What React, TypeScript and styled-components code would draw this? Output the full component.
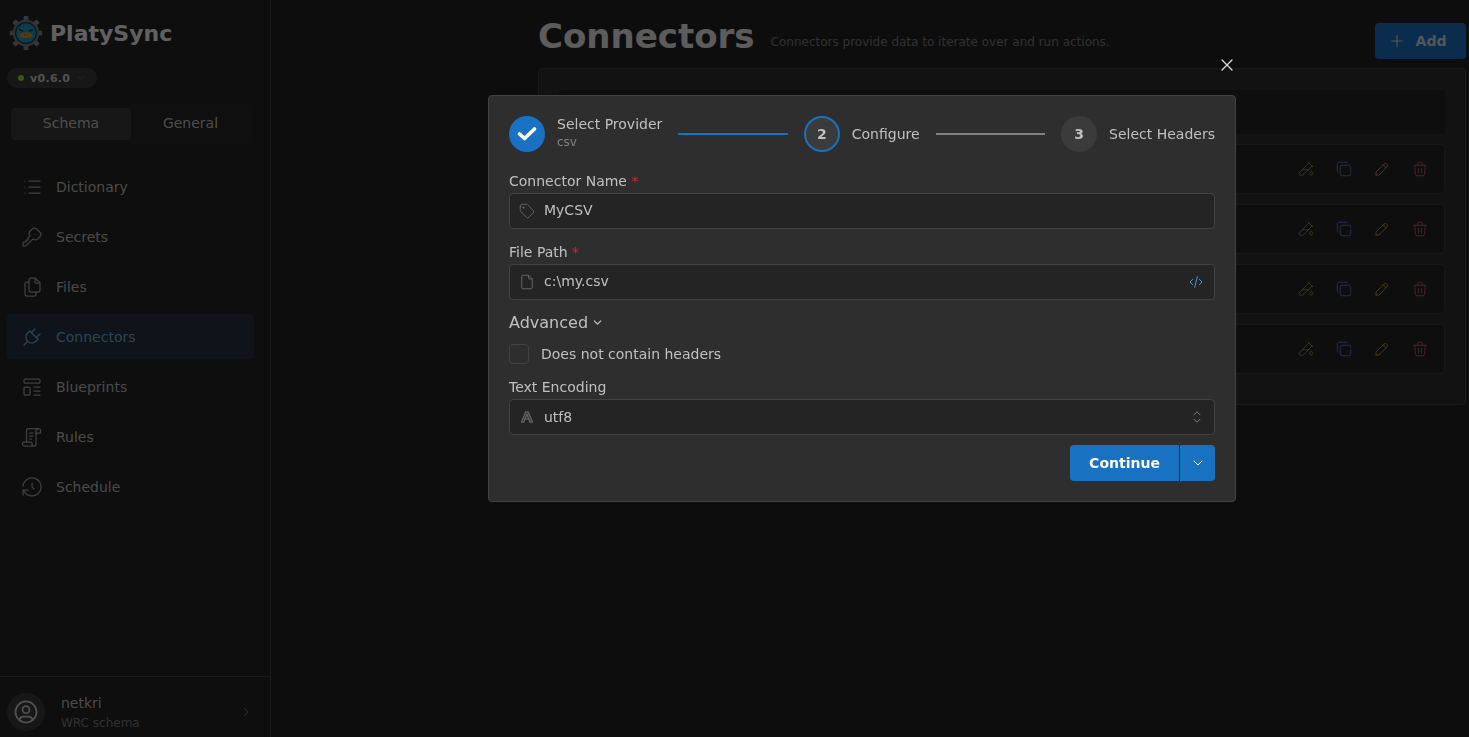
import { FC, ReactNode } from "react";
import styled, { createGlobalStyle } from "styled-components";
import {
  TbChevronDown,
  TbChevronRight,
  TbCode,
  TbCopy,
  TbFile,
  TbFiles,
  TbHistory,
  TbKey,
  TbList,
  TbPencil,
  TbPlug,
  TbPlus,
  TbSelector,
  TbTag,
  TbTemplate,
  TbTestPipe,
  TbTrash,
  TbUserCircle,
  TbX,
} from "react-icons/tb";

const GlobalStyle = createGlobalStyle`
  html, body {
    margin: 0;
    height: 100%;
    overflow: hidden;
    background: #222222;
  }
  * {
    box-sizing: border-box;
  }
  body {
    font-family: "DejaVu Sans", sans-serif;
    font-size: 14px;
    color: #c9c9c9;
  }
`;

const Shell = styled.div`
  display: flex;
  height: 737px;
`;

const Sidebar = styled.aside`
  width: 271px;
  flex-shrink: 0;
  display: flex;
  flex-direction: column;
  border-right: 1px solid #424242;
  background: #242424;
`;

const Brand = styled.div`
  display: flex;
  align-items: center;
  gap: 7px;
  padding: 0 0 2px 9px;
  height: 68px;
`;

const BrandName = styled.span`
  font-size: 22px;
  font-weight: 700;
  color: #f0f0f0;
`;

const VersionBadge = styled.div`
  width: 90px;
  height: 20px;
  margin-left: 7px;
  padding-left: 11px;
  display: flex;
  align-items: center;
  gap: 6px;
  border-radius: 10px;
  background: #3b3b3b;
  font-size: 11px;
  font-weight: 700;
  letter-spacing: 0.3px;
  color: #c9c9c9;
`;

const Dot = styled.span`
  width: 6px;
  height: 6px;
  border-radius: 50%;
  background: #94d82d;
`;

const Tabs = styled.div`
  margin: 16px 16px 0 7px;
  height: 40px;
  padding: 4px;
  display: grid;
  grid-template-columns: 120px 1fr;
  gap: 0;
  border-radius: 4px;
  background: #262626;
`;

const Tab = styled.div<{ $active?: boolean }>`
  display: flex;
  align-items: center;
  justify-content: center;
  padding-bottom: 2px;
  border-radius: 4px;
  background: ${(p) => (p.$active ? "#3b3b3b" : "transparent")};
  color: #c0c0c0;
`;

const Nav = styled.nav`
  display: flex;
  flex-direction: column;
  gap: 5px;
  margin: 20px 16px 0 7px;
  flex: 1;
`;

const NavItem = styled.div<{ $active?: boolean }>`
  height: 45px;
  display: flex;
  align-items: center;
  gap: 12px;
  padding-left: 13px;
  border-radius: 4px;
  background: ${(p) => (p.$active ? "rgba(34, 139, 230, 0.15)" : "transparent")};
  color: ${(p) => (p.$active ? "#74a9d8" : "#b8b8b8")};
  font-size: 14px;

  svg {
    width: 24px;
    height: 24px;
    stroke-width: 1.25;
    color: ${(p) => (p.$active ? "#74a9d8" : "#a0a0a0")};
  }
`;

const UserRow = styled.div`
  height: 61px;
  border-top: 1px solid #424242;
  display: flex;
  align-items: center;
  padding: 10px 16px 0 7px;
`;

const Avatar = styled.div`
  width: 38px;
  height: 38px;
  border-radius: 50%;
  background: #3b3b3b;
  display: flex;
  align-items: center;
  justify-content: center;
  color: #c9c9c9;

  svg {
    width: 28px;
    height: 28px;
    stroke-width: 1.5;
  }
`;

const UserText = styled.div`
  flex: 1;
  margin-left: 16px;
  display: flex;
  flex-direction: column;
  gap: 5px;
`;

const UserName = styled.span`
  font-size: 14px;
  color: #b8b8b8;
`;

const UserSchema = styled.span`
  font-size: 12px;
  color: #7a7a7a;
`;

const Muted = styled.span`
  display: inline-flex;
  color: #828282;

  svg {
    stroke-width: 1.25;
  }
`;

const Main = styled.main`
  flex: 1;
  padding: 14px 3px 0 267px;
  display: flex;
  flex-direction: column;
`;

const PageHeader = styled.header`
  display: flex;
  align-items: flex-start;
  height: 54px;
`;

const PageTitle = styled.h1`
  margin: 0;
  font-size: 34px;
  line-height: 44px;
  font-weight: 700;
  color: #e6e6e6;
`;

const PageHint = styled.span`
  margin: 20px 0 0 16px;
  flex: 1;
  font-size: 12px;
  line-height: 16px;
  color: #7a7a7a;
`;

const AddButton = styled.div`
  width: 91px;
  height: 36px;
  margin-top: 9px;
  padding-right: 7px;
  display: flex;
  align-items: center;
  justify-content: center;
  gap: 10px;
  border-radius: 4px;
  background: #1971c2;
  color: #d8d8d8;
  font-weight: 700;

  svg {
    width: 18px;
    height: 18px;
    stroke-width: 1.5;
  }
`;

const Card = styled.section`
  height: 337px;
  padding: 21px 20px 0;
  display: flex;
  flex-direction: column;
  gap: 10px;
  border: 1px solid #424242;
  border-radius: 4px;
  background: #2e2e2e;
`;

const CardHead = styled.div`
  height: 44px;
  border-radius: 4px;
  background: #242424;
`;

const Row = styled.div`
  height: 50px;
  padding-right: 14px;
  display: flex;
  align-items: center;
  justify-content: flex-end;
  gap: 18px;
  border: 1px solid #3b3b3b;
  border-radius: 4px;
  background: #242424;
`;

const RowAction = styled.span<{ $color: string }>`
  width: 20px;
  display: flex;
  justify-content: center;
  color: ${(p) => p.$color};

  svg {
    width: 18px;
    height: 18px;
    stroke-width: 1.25;
  }
`;

const Overlay = styled.div`
  position: fixed;
  inset: 0;
  padding: 95px 0 0 255px;
  display: flex;
  justify-content: center;
  align-items: flex-start;
  background: rgba(0, 0, 0, 0.6);
  will-change: transform;
`;

const Modal = styled.div`
  position: relative;
  width: 748px;
  height: 407px;
  padding: 20px;
  border: 1px solid #424242;
  border-radius: 4px;
  background: #2e2e2e;
`;

const CloseButton = styled.span`
  position: absolute;
  top: -41px;
  right: -2px;
  color: #dcdcdc;
  display: flex;

  svg {
    width: 20px;
    height: 20px;
    stroke-width: 1.5;
  }
`;

const Stepper = styled.div`
  display: flex;
  align-items: center;
  height: 36px;
`;

const Step = styled.div`
  display: flex;
  align-items: center;
  gap: 12px;
`;

const StepCircle = styled.div<{ $state: "done" | "current" | "todo" }>`
  width: 36px;
  height: 36px;
  border-radius: 50%;
  display: flex;
  align-items: center;
  justify-content: center;
  font-weight: 700;
  font-size: 14px;
  color: ${(p) => (p.$state === "done" ? "#fff" : "#c0c0c0")};
  background: ${(p) => (p.$state === "done" ? "#1971c2" : "#3b3b3b")};
  border: ${(p) => (p.$state === "current" ? "2px solid #1971c2" : "none")};
`;

const StepText = styled.div`
  display: flex;
  flex-direction: column;
  gap: 3px;
  padding-bottom: 3px;
`;

const StepLabel = styled.span`
  font-size: 14px;
  line-height: 16px;
  color: #c0c0c0;
`;

const StepHint = styled.span`
  font-size: 12px;
  line-height: 14px;
  color: #828282;
`;

const StepLine = styled.div<{ $done?: boolean }>`
  flex: 1;
  height: 2px;
  margin: 0 16px;
  background: ${(p) => (p.$done ? "#1971c2" : "#828282")};
`;

const Field = styled.div<{ $first?: boolean }>`
  margin-top: ${(p) => (p.$first ? "20px" : "14px")};
  display: flex;
  flex-direction: column;
  gap: 3px;
`;

const FieldLabel = styled.label`
  font-size: 14px;
  line-height: 18px;
  color: #c0c0c0;

  em {
    font-style: normal;
    color: #c92a2a;
  }
`;

const InputBox = styled.div`
  height: 36px;
  display: flex;
  align-items: center;
  padding: 0 9px;
  gap: 9px;
  border: 1px solid #424242;
  border-radius: 4px;
  background: #242424;
  font-size: 14px;
  color: #c0c0c0;
`;

const InputIcon = styled.span`
  width: 16px;
  display: flex;
  justify-content: center;
  color: #666;

  svg {
    width: 18px;
    height: 18px;
    flex-shrink: 0;
    stroke-width: 1.25;
  }
`;

const InputValue = styled.span<{ $select?: boolean }>`
  flex: 1;
  padding-bottom: ${(p) => (p.$select ? "0" : "2px")};
`;

const CodeToggle = styled.span`
  display: flex;
  margin-right: 1px;
  color: #4a96d8;

  svg {
    width: 16px;
    height: 16px;
    stroke-width: 1.5;
  }
`;

const SelectArrows = styled.span`
  display: flex;
  margin-right: -1px;
  color: #828282;

  svg {
    width: 18px;
    height: 18px;
    stroke-width: 1.25;
  }
`;

const AdvancedToggle = styled.div`
  margin-top: 12px;
  height: 20px;
  display: flex;
  align-items: center;
  gap: 3px;
  font-size: 16px;
  color: #c0c0c0;

  svg {
    width: 13px;
    height: 13px;
    stroke-width: 2.5;
  }
`;

const CheckRow = styled.div`
  margin-top: 12px;
  display: flex;
  align-items: center;
  gap: 12px;
  color: #c0c0c0;
`;

const Checkbox = styled.span`
  width: 20px;
  height: 20px;
  border: 1px solid #424242;
  border-radius: 4px;
  background: #2e2e2e;
`;

const Footer = styled.div`
  margin-top: 10px;
  display: flex;
  justify-content: flex-end;
`;

const ContinueButton = styled.div`
  width: 109px;
  height: 36px;
  display: flex;
  align-items: center;
  justify-content: center;
  border-radius: 4px 0 0 4px;
  background: #1971c2;
  color: #fff;
  font-weight: 700;
`;

const MenuButton = styled.div`
  width: 36px;
  height: 36px;
  display: flex;
  align-items: center;
  justify-content: center;
  border-left: 1px solid #1f1f1f;
  border-radius: 0 4px 4px 0;
  background: #1971c2;
  color: #fff;

  svg {
    width: 16px;
    height: 16px;
    stroke-width: 1.5;
  }
`;

const Logo: FC = () => (
  <svg width="34" height="36" viewBox="0 0 34 38">
    <g fill="#8a8a8a">
      <rect x="14.5" y="1" width="5" height="7" rx="1" />
      <rect x="14.5" y="30" width="5" height="7" rx="1" />
      <rect x="0" y="16.5" width="7" height="5" rx="1" />
      <rect x="27" y="16.5" width="7" height="5" rx="1" />
      <rect x="14.5" y="1" width="5" height="7" rx="1" transform="rotate(45 17 19)" />
      <rect x="14.5" y="1" width="5" height="7" rx="1" transform="rotate(135 17 19)" />
      <rect x="14.5" y="1" width="5" height="7" rx="1" transform="rotate(225 17 19)" />
      <rect x="14.5" y="1" width="5" height="7" rx="1" transform="rotate(315 17 19)" />
    </g>
    <circle cx="17" cy="19" r="14" fill="#7c7c7c" />
    <circle cx="17" cy="19" r="11" fill="#1f9bb8" />
    <circle cx="17" cy="19" r="11" fill="none" stroke="#0b3b4c" strokeWidth="1.2" />
    <path d="M10 15.5 l3.5 1.5 M24 15.5 l-3.5 1.5" stroke="#0b2c38" strokeWidth="1.4" strokeLinecap="round" />
    <path d="M9.8 22.8 C10 20 13.5 18.2 17 18.2 C20.5 18.2 24 20 24.2 22.8 C22 24.6 12 24.6 9.8 22.8Z" fill="#ee8a2c" />
    <path d="M15.5 21 h0.1 M18.4 21 h0.1" stroke="#6e3208" strokeWidth="1.2" strokeLinecap="round" />
  </svg>
);

const CheckMark: FC = () => (
  <svg width="20" height="16" viewBox="0 0 20 16" fill="none" stroke="#fff" strokeWidth="3.6" strokeLinecap="round" strokeLinejoin="round">
    <path d="M2.5 8 L7.5 12.5 L17.5 3" />
  </svg>
);

const ScrollIcon: FC = () => (
  <svg viewBox="0 0 24 24" fill="none" stroke="currentColor" strokeLinecap="round" strokeLinejoin="round">
    <path d="M6.5 17 V6 a2.5 2.5 0 0 1 2.5 -2.5 H18.5 a2 2 0 0 1 2 2 V8 H16" />
    <path d="M18.5 3.5 a2.5 2.5 0 0 0 -2.5 2.5 V19 a2 2 0 0 1 -2 2 H5 a2.5 2.5 0 0 1 -2.5 -2.5 V18 a1 1 0 0 1 1 -1 H11 a1 1 0 0 1 1 1 V19 a2 2 0 0 0 2 2" />
    <path d="M9.5 8 h3.5 M9.5 11 h3.5 M9.5 14 h2" />
  </svg>
);

const OutlinedA: FC = () => (
  <svg viewBox="-3 -3 22 22" fill="none" stroke="currentColor" strokeWidth="1.4" strokeLinejoin="round">
    <path d="M1 14.5 L6.5 1.5 H9.5 L15 14.5 H11.5 L8 5 L4 14.5 Z" fill="currentColor" fillOpacity="0.45" />
    <path d="M5 10.5 H11" />
  </svg>
);

const navItems: { label: string; icon: ReactNode; active?: boolean }[] = [
  { label: "Dictionary", icon: <TbList /> },
  { label: "Secrets", icon: <TbKey /> },
  { label: "Files", icon: <TbFiles /> },
  { label: "Connectors", icon: <TbPlug />, active: true },
  { label: "Blueprints", icon: <TbTemplate /> },
  { label: "Rules", icon: <ScrollIcon /> },
  { label: "Schedule", icon: <TbHistory /> },
];

const App: FC = () => {
  return (
    <>
      <GlobalStyle />
      <Shell>
        <Sidebar>
          <Brand>
            <Logo />
            <BrandName>PlatySync</BrandName>
          </Brand>
          <VersionBadge>
            <Dot />
            v0.6.0
            <Muted>
              <TbChevronDown size={10} />
            </Muted>
          </VersionBadge>
          <Tabs>
            <Tab $active>Schema</Tab>
            <Tab>General</Tab>
          </Tabs>
          <Nav>
            {navItems.map((item) => (
              <NavItem key={item.label} $active={item.active}>
                {item.icon}
                {item.label}
              </NavItem>
            ))}
          </Nav>
          <UserRow>
            <Avatar>
              <TbUserCircle />
            </Avatar>
            <UserText>
              <UserName>netkri</UserName>
              <UserSchema>WRC schema</UserSchema>
            </UserText>
            <Muted>
              <TbChevronRight size={16} />
            </Muted>
          </UserRow>
        </Sidebar>
        <Main>
          <PageHeader>
            <PageTitle>Connectors</PageTitle>
            <PageHint>Connectors provide data to iterate over and run actions.</PageHint>
            <AddButton>
              <TbPlus />
              Add
            </AddButton>
          </PageHeader>
          <Card>
            <CardHead />
            {[0, 1, 2, 3].map((i) => (
              <Row key={i}>
                <RowAction $color="#7a9a30">
                  <TbTestPipe />
                </RowAction>
                <RowAction $color="#5f74cc">
                  <TbCopy />
                </RowAction>
                <RowAction $color="#c98a2a">
                  <TbPencil />
                </RowAction>
                <RowAction $color="#b85a5a">
                  <TbTrash />
                </RowAction>
              </Row>
            ))}
          </Card>
        </Main>
      </Shell>
      <Overlay>
        <Modal>
          <CloseButton>
            <TbX />
          </CloseButton>
          <Stepper>
            <Step>
              <StepCircle $state="done">
                <CheckMark />
              </StepCircle>
              <StepText>
                <StepLabel>Select Provider</StepLabel>
                <StepHint>csv</StepHint>
              </StepText>
            </Step>
            <StepLine $done />
            <Step>
              <StepCircle $state="current">2</StepCircle>
              <StepLabel>Configure</StepLabel>
            </Step>
            <StepLine />
            <Step>
              <StepCircle $state="todo">3</StepCircle>
              <StepLabel>Select Headers</StepLabel>
            </Step>
          </Stepper>
          <Field $first>
            <FieldLabel>
              Connector Name <em>*</em>
            </FieldLabel>
            <InputBox>
              <InputIcon>
                <TbTag />
              </InputIcon>
              <InputValue>MyCSV</InputValue>
            </InputBox>
          </Field>
          <Field>
            <FieldLabel>
              File Path <em>*</em>
            </FieldLabel>
            <InputBox>
              <InputIcon>
                <TbFile />
              </InputIcon>
              <InputValue>c:\my.csv</InputValue>
              <CodeToggle>
                <TbCode />
              </CodeToggle>
            </InputBox>
          </Field>
          <AdvancedToggle>
            Advanced
            <TbChevronDown />
          </AdvancedToggle>
          <CheckRow>
            <Checkbox />
            Does not contain headers
          </CheckRow>
          <Field>
            <FieldLabel>Text Encoding</FieldLabel>
            <InputBox>
              <InputIcon>
                <OutlinedA />
              </InputIcon>
              <InputValue $select>utf8</InputValue>
              <SelectArrows>
                <TbSelector />
              </SelectArrows>
            </InputBox>
          </Field>
          <Footer>
            <ContinueButton>Continue</ContinueButton>
            <MenuButton>
              <TbChevronDown />
            </MenuButton>
          </Footer>
        </Modal>
      </Overlay>
    </>
  );
};

export default App;
